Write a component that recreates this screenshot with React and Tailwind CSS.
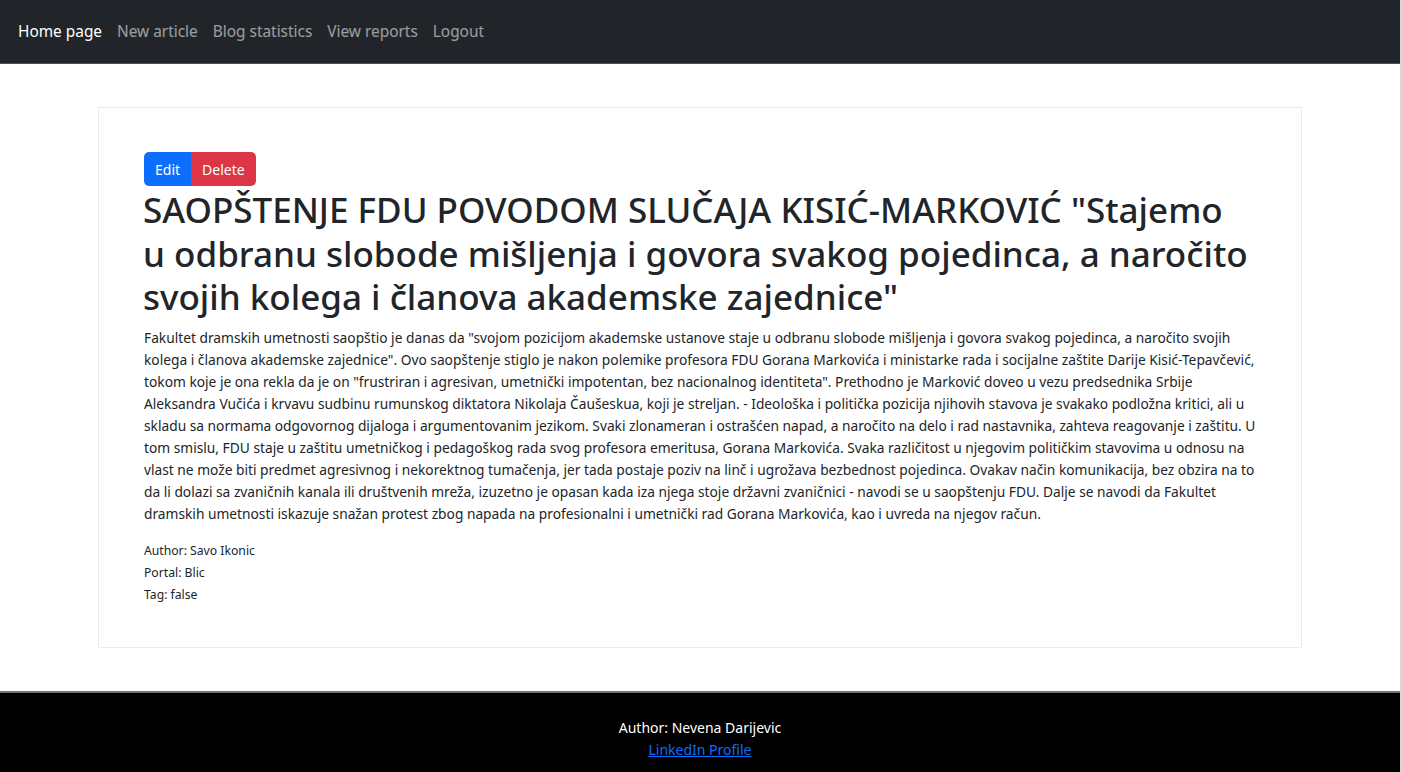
const navLinks = ['New article', 'Blog statistics', 'View reports', 'Logout'];

const titleLines = [
  'SAOPŠTENJE FDU POVODOM SLUČAJA KISIĆ-MARKOVIĆ "Stajemo',
  'u odbranu slobode mišljenja i govora svakog pojedinca, a naročito',
  'svojih kolega i članova akademske zajednice"',
];

const bodyLines = [
  'Fakultet dramskih umetnosti saopštio je danas da "svojom pozicijom akademske ustanove staje u odbranu slobode mišljenja i govora svakog pojedinca, a naročito svojih',
  'kolega i članova akademske zajednice". Ovo saopštenje stiglo je nakon polemike profesora FDU Gorana Markovića i ministarke rada i socijalne zaštite Darije Kisić-Tepavčević,',
  'tokom koje je ona rekla da je on "frustriran i agresivan, umetnički impotentan, bez nacionalnog identiteta". Prethodno je Marković doveo u vezu predsednika Srbije',
  'Aleksandra Vučića i krvavu sudbinu rumunskog diktatora Nikolaja Čaušeskua, koji je streljan. - Ideološka i politička pozicija njihovih stavova je svakako podložna kritici, ali u',
  'skladu sa normama odgovornog dijaloga i argumentovanim jezikom. Svaki zlonameran i ostrašćen napad, a naročito na delo i rad nastavnika, zahteva reagovanje i zaštitu. U',
  'tom smislu, FDU staje u zaštitu umetničkog i pedagoškog rada svog profesora emeritusa, Gorana Markovića. Svaka različitost u njegovim političkim stavovima u odnosu na',
  'vlast ne može biti predmet agresivnog i nekorektnog tumačenja, jer tada postaje poziv na linč i ugrožava bezbednost pojedinca. Ovakav način komunikacija, bez obzira na to',
  'da li dolazi sa zvaničnih kanala ili društvenih mreža, izuzetno je opasan kada iza njega stoje državni zvaničnici - navodi se u saopštenju FDU. Dalje se navodi da Fakultet',
  'dramskih umetnosti iskazuje snažan protest zbog napada na profesionalni i umetnički rad Gorana Markovića, kao i uvreda na njegov račun.',
];

export default function App() {
  return (
    <div
      className="min-h-screen flex bg-white text-[#212529]"
      style={{ fontFamily: '"Noto Sans", "Open Sans", sans-serif' }}
    >
      <div className="flex-1 min-w-0 flex flex-col">
        <nav className="h-[64px] bg-[#212529] border-b border-[#495057] flex items-center px-[18px] gap-[15px] text-[15.4px]">
          <a className="text-white">Home page</a>
          {navLinks.map((l) => (
            <a key={l} className="text-white/55">
              {l}
            </a>
          ))}
        </nav>

        <main className="min-w-0 pt-[43px] pb-[43px] px-[98px]">
          <div className="border border-[#e9ecef] px-[45px] pt-[44px] pb-[41px] overflow-hidden">
            <div className="flex">
              <button className="h-[34px] px-[11px] rounded-l-[5px] bg-[#0d6efd] text-white text-[14px]">
                Edit
              </button>
              <button className="h-[34px] px-[11px] rounded-r-[5px] bg-[#dc3545] text-white text-[14px]">
                Delete
              </button>
            </div>
            <h1 className="text-[35px] leading-[43.5px] font-medium mt-[2px] mb-[8px] -ml-[1px]">
              {titleLines.map((l) => (
                <span key={l} className="block whitespace-nowrap">
                  {l}
                </span>
              ))}
            </h1>
            <p className="text-[13.75px] leading-[22px]">
              {bodyLines.map((l) => (
                <span key={l} className="block whitespace-nowrap">
                  {l}
                </span>
              ))}
            </p>
            <div className="mt-[15px] text-[12.2px] leading-[22px]">
              <div>Author: Savo Ikonic</div>
              <div>Portal: Blic</div>
              <div>Tag: false</div>
            </div>
          </div>
        </main>

        <footer className="flex-1 bg-black border-t-2 border-[#6c757d] flex flex-col items-center pt-[24px] pb-[10px] text-[14px] leading-[22px]">
          <div className="text-white">Author: Nevena Darijevic</div>
          <a href="#" className="text-[#0d6efd] underline">
            LinkedIn Profile
          </a>
        </footer>
      </div>
      <div className="w-[2px] bg-[#d9d9d9]" />
    </div>
  );
}
